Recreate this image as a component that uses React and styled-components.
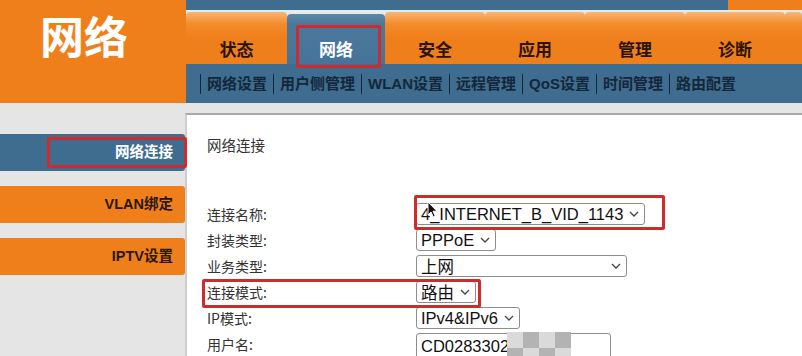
import React from "react";
import styled, { createGlobalStyle } from "styled-components";

const GlobalStyle = createGlobalStyle`
  html, body {
    margin: 0;
    padding: 0;
  }
  body {
    width: 802px;
    height: 356px;
    overflow: hidden;
    background: #e5e5e5;
    font-family: "Liberation Sans", "Noto Sans CJK SC", sans-serif;
  }
`;

const ORANGE = "#ef7f1b";
const BLUE = "#3f6d8f";
const RED = "#cf2b2d";

const Page = styled.div`
  width: 802px;
  height: 356px;
  overflow: hidden;
  display: flex;
  flex-direction: column;
  background: #e5e5e5;
`;

const Header = styled.header`
  display: flex;
  height: 103px;
  flex-shrink: 0;
  position: relative;
  z-index: 2;
`;

const Logo = styled.div`
  width: 186px;
  flex-shrink: 0;
  box-sizing: border-box;
  background: ${ORANGE};
  color: #fff;
  font-family: "Noto Sans CJK SC", sans-serif;
  font-weight: 700;
  font-size: 44px;
  line-height: 44px;
  padding: 13px 0 0 40px;
`;

const Nav = styled.nav`
  flex: 1;
  display: flex;
  flex-direction: column;
`;

const TopStrip = styled.div`
  height: 10px;
  background: ${BLUE};
  display: flex;
  justify-content: flex-end;
`;

const OrangeCap = styled.div`
  width: 74px;
  background: ${ORANGE};
`;

const TabRow = styled.ul`
  list-style: none;
  margin: 0;
  padding: 0;
  height: 54px;
  background: #e4ebf0;
  display: flex;
  align-items: flex-end;
`;

const Tab = styled.li`
  position: relative;
  box-sizing: border-box;
  width: ${(p) => (p.$width ? `${p.$width}px` : "auto")};
  flex: ${(p) => (p.$width ? "0 0 auto" : "1")};
  height: ${(p) => (p.$active ? 50 : 52)}px;
  border-radius: 4px 4px 0 0;
  background: ${(p) =>
    p.$active
      ? "linear-gradient(to bottom, #5d87a6 0, #4b789a 10px, #46739a 100%)"
      : "linear-gradient(to bottom, #f8b575 0, #f38c2c 12px, #ef7f1b 26px)"};
  color: ${(p) => (p.$active ? "#fff" : "#2a1407")};
  font-family: "Noto Sans CJK SC", sans-serif;
  font-weight: 700;
  font-size: 17px;
  line-height: 17px;
  display: flex;
  align-items: flex-end;
  justify-content: center;
  padding-bottom: 7px;
`;

const SubMenu = styled.div`
  height: 39px;
  background: ${BLUE};
  display: flex;
  align-items: center;
  padding-left: 14px;
`;

const SubItem = styled.span`
  font-family: "Liberation Sans", "Noto Sans CJK SC", sans-serif;
  font-weight: 700;
  font-size: 15px;
  color: #14273a;
  padding: 0 6px;
  border-left: 1.5px solid #14273a;
  line-height: 20px;
`;

const Body = styled.div`
  flex: 1;
  display: flex;
`;

const Sidebar = styled.aside`
  width: 185px;
  flex-shrink: 0;
  padding-top: 31px;
  display: flex;
  flex-direction: column;
  gap: 15px;
  position: relative;
  z-index: 1;
`;

const SideItem = styled.div`
  position: relative;
  height: 37px;
  box-sizing: border-box;
  border-radius: 0 3px 3px 0;
  background: ${(p) => (p.$active ? BLUE : ORANGE)};
  color: ${(p) => (p.$active ? "#fff" : "#2a1709")};
  font-family: "Liberation Sans", "Noto Sans CJK SC", sans-serif;
  font-weight: 700;
  font-size: 14.5px;
  line-height: 37px;
  text-align: right;
  padding-right: 12px;
`;

const Content = styled.main`
  flex: 1;
  padding-top: 10px;
  display: flex;
`;

const Panel = styled.section`
  flex: 1;
  background: #fff;
  border-top: 2px solid #a9a9a9;
  border-left: 2px solid #cdcdcd;
  padding: 21px 0 0 20px;
`;

const Title = styled.div`
  font-family: "Noto Sans CJK SC", sans-serif;
  font-size: 14.5px;
  line-height: 18px;
  color: #333;
`;

const Form = styled.div`
  margin-top: 47px;
  display: flex;
  flex-direction: column;
`;

const Row = styled.div`
  position: relative;
  height: 26px;
  width: fit-content;
  display: flex;
  align-items: center;
`;

const Label = styled.span`
  width: 209px;
  flex-shrink: 0;
  font-family: "Noto Sans CJK SC", sans-serif;
  font-size: 14px;
  color: #333;
`;

const Select = styled.div`
  position: relative;
  box-sizing: border-box;
  height: 22px;
  width: ${(p) => (p.$width ? `${p.$width}px` : "auto")};
  display: inline-flex;
  align-items: center;
  justify-content: space-between;
  gap: 6px;
  padding: 0 5px 0 4px;
  border: 1px solid #8d8d8d;
  border-radius: 3px;
  background: #fff;
  font-family: "Liberation Sans", "Noto Sans CJK SC", sans-serif;
  font-size: 16.5px;
  color: #111;
  white-space: nowrap;
`;

const Input = styled.div`
  position: relative;
  box-sizing: border-box;
  width: 195px;
  height: 27px;
  margin-top: 5px;
  display: flex;
  align-items: center;
  padding-left: 4px;
  border: 1px solid #8d8d8d;
  border-radius: 3px;
  font-family: "Liberation Sans", sans-serif;
  font-size: 16.5px;
  color: #111;
`;

const Mosaic = styled.div`
  position: absolute;
  left: 90px;
  top: -2px;
  display: grid;
  grid-template-columns: repeat(4, 16px);
  grid-auto-rows: 16px;
`;

const Pixel = styled.span`
  background: ${(p) => (p.$dark ? "#b3b3b3" : "#dadada")};
`;

const Highlight = styled.div`
  position: absolute;
  top: ${(p) => p.$t}px;
  left: ${(p) => p.$l}px;
  right: ${(p) => p.$r}px;
  bottom: ${(p) => p.$b}px;
  border: 3px solid ${RED};
  border-radius: 2px;
  pointer-events: none;
  z-index: 3;
`;

const Cursor = styled.svg`
  position: absolute;
  left: 10px;
  top: -3px;
  z-index: 4;
`;

const Chevron = () => (
  <svg width="10" height="6" viewBox="0 0 10 6">
    <polyline
      points="1,1 5,5 9,1"
      fill="none"
      stroke="#444"
      strokeWidth="1.3"
    />
  </svg>
);

const tabs = [
  { label: "状态", width: 101 },
  { label: "网络", width: 98, active: true },
  { label: "安全", width: 100 },
  { label: "应用", width: 100 },
  { label: "管理", width: 100 },
  { label: "诊断", width: 100 },
  { label: "" },
];

const subMenus = [
  "网络设置",
  "用户侧管理",
  "WLAN设置",
  "远程管理",
  "QoS设置",
  "时间管理",
  "路由配置",
];

const mosaic = [false, true, false, true, true, false, true, false];

const App = () => {
  return (
    <>
      <GlobalStyle />
      <Page>
        <Header>
          <Logo>网络</Logo>
          <Nav>
            <TopStrip>
              <OrangeCap />
            </TopStrip>
            <TabRow>
              {tabs.map((t, i) => (
                <Tab key={i} $width={t.width} $active={t.active}>
                  {t.label}
                  {t.active && <Highlight $t={11} $l={9} $r={4} $b={-4} />}
                </Tab>
              ))}
            </TabRow>
            <SubMenu>
              {subMenus.map((s) => (
                <SubItem key={s}>{s}</SubItem>
              ))}
            </SubMenu>
          </Nav>
        </Header>
        <Body>
          <Sidebar>
            <SideItem $active>
              网络连接
              <Highlight $t={3} $l={47} $r={-2} $b={3} />
            </SideItem>
            <SideItem>VLAN绑定</SideItem>
            <SideItem>IPTV设置</SideItem>
          </Sidebar>
          <Content>
            <Panel>
              <Title>网络连接</Title>
              <Form>
                <Row>
                  <Label>连接名称:</Label>
                  <Select>
                    4_INTERNET_B_VID_1143
                    <Chevron />
                    <Cursor width="11" height="17" viewBox="0 0 11 17">
                      <path
                        d="M1 1 L1 14 L4 11 L6.3 16 L8.3 15.1 L6 10.2 L10 10.2 Z"
                        fill="#111"
                        stroke="#fff"
                        strokeWidth="1"
                        strokeLinejoin="round"
                      />
                    </Cursor>
                    <Highlight $t={-9} $l={-3} $r={-21} $b={-6} />
                  </Select>
                </Row>
                <Row>
                  <Label>封装类型:</Label>
                  <Select>
                    PPPoE
                    <Chevron />
                  </Select>
                </Row>
                <Row>
                  <Label>业务类型:</Label>
                  <Select $width={211}>
                    上网
                    <Chevron />
                  </Select>
                </Row>
                <Row>
                  <Label>连接模式:</Label>
                  <Select>
                    路由
                    <Chevron />
                  </Select>
                  <Highlight $t={0} $l={-5} $r={-5} $b={-3} />
                </Row>
                <Row>
                  <Label>IP模式:</Label>
                  <Select>
                    IPv4&amp;IPv6
                    <Chevron />
                  </Select>
                </Row>
                <Row>
                  <Label>用户名:</Label>
                  <Input>
                    CD0283302
                    <Mosaic>
                      {mosaic.map((d, i) => (
                        <Pixel key={i} $dark={d} />
                      ))}
                    </Mosaic>
                  </Input>
                </Row>
              </Form>
            </Panel>
          </Content>
        </Body>
      </Page>
    </>
  );
};

export default App;
